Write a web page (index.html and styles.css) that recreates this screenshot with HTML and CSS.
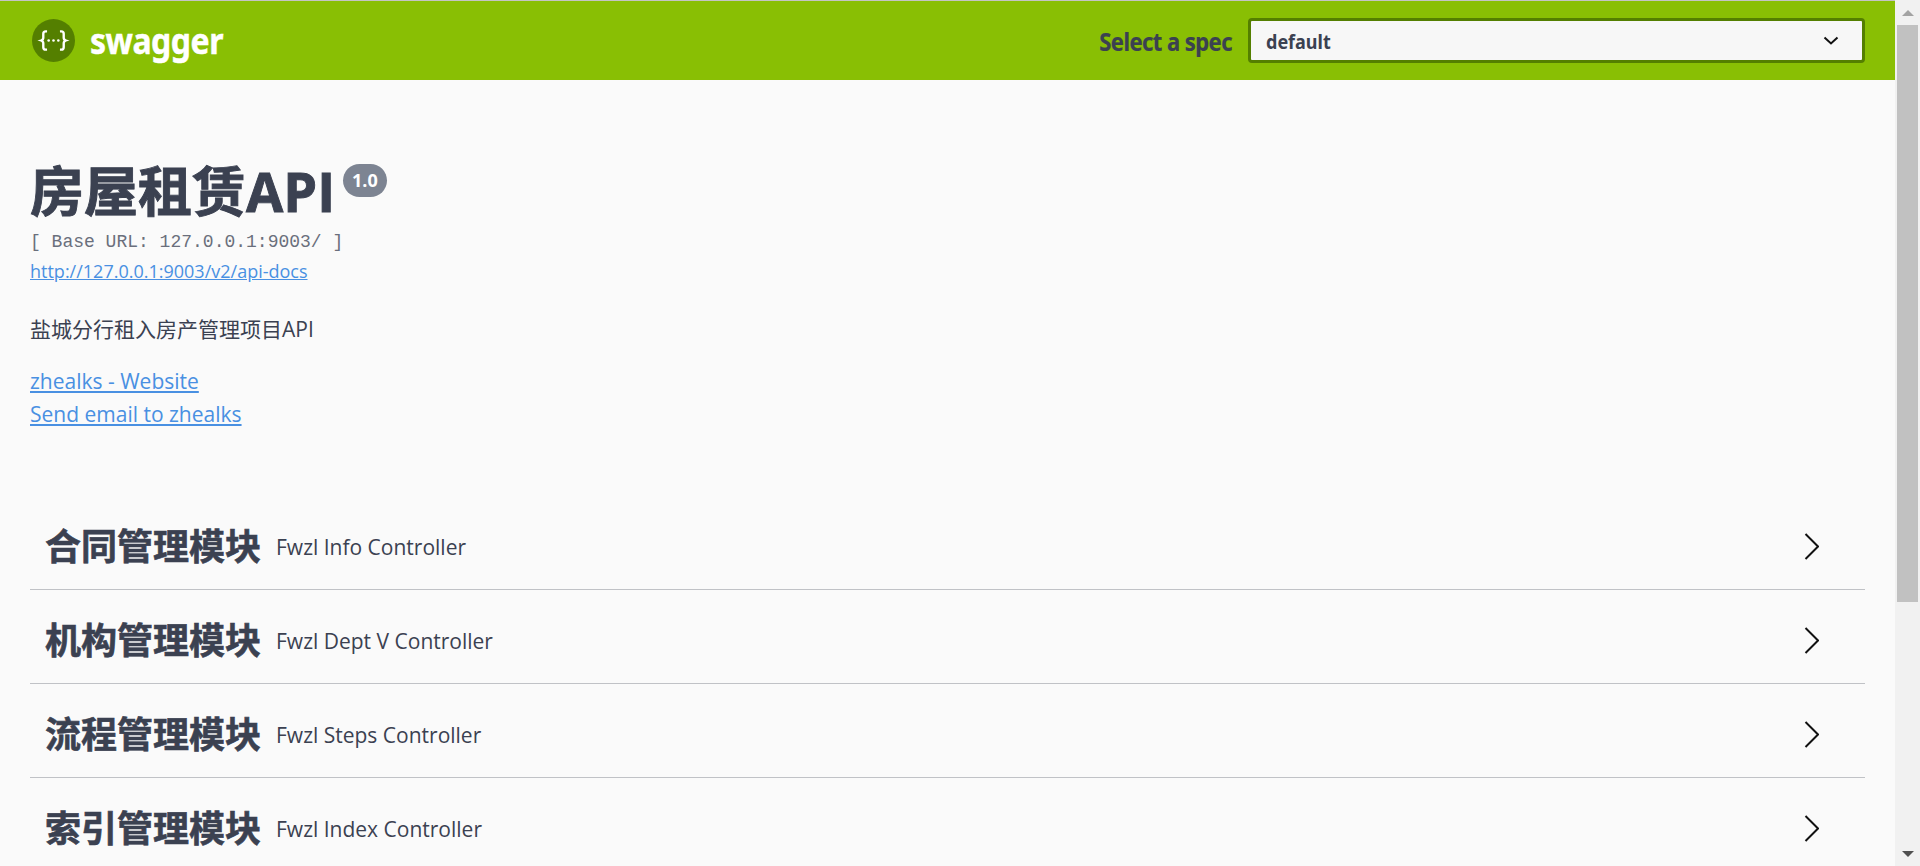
FILE: index.html
```html
<!DOCTYPE html>
<html lang="zh-CN">
<head>
<meta charset="utf-8">
<title>Swagger UI</title>
<link rel="stylesheet" href="styles.css">
</head>
<body>
<div class="app">
  <main class="page">
    <header class="topbar">
      <a class="brand">
        <svg class="brand-icon" viewBox="0 0 40 40" width="43" height="43" aria-hidden="true">
          <circle cx="20" cy="20" r="20" fill="#547f00"/>
          <path d="M14 11.5h-1.2c-1.6 0-2.3.9-2.3 2.3v3.6c0 1.4-.8 2.2-2 2.6 1.2.4 2 1.200 2 2.600v3.600c0 1.400.7 2.300 2.300 2.300H14M26 11.500h1.200c1.600 0 2.300.9 2.300 2.300v3.600c0 1.400.8 2.200 2 2.600-1.200.4-2 1.200-2 2.600v3.600c0 1.400-.7 2.300-2.300 2.300H26" fill="none" stroke="#fff" stroke-width="2.200"/>
          <circle cx="15.500" cy="20" r="1.200" fill="#fff"/><circle cx="20" cy="20" r="1.200" fill="#fff"/><circle cx="24.500" cy="20" r="1.200" fill="#fff"/>
        </svg>
        <span class="brand-name">swagger</span>
      </a>
      <label class="spec">
        <span class="spec-label">Select a spec</span>
        <span class="spec-select">
          <span class="spec-value">default</span>
          <svg viewBox="0 0 16 9" width="16" height="9" aria-hidden="true"><path d="M1.500 1.500 8 7.500l6.500-6" fill="none" stroke="#111" stroke-width="2"/></svg>
        </span>
      </label>
    </header>
    <section class="info">
      <h2 class="title"><span>房屋租赁API</span><span class="version">1.0</span></h2>
      <pre class="base-url">[ Base URL: 127.0.0.1:9003/ ]</pre>
      <a class="docs-link">http://127.0.0.1:9003/v2/api-docs</a>
      <p class="desc">盐城分行租入房产管理项目API</p>
      <a class="contact">zhealks - Website</a>
      <a class="contact">Send email to zhealks</a>
    </section>
    <section class="tags">
      <div class="tag"><h4 class="tag-name">合同管理模块</h4><small class="tag-desc">Fwzl Info Controller</small><svg class="arrow" viewBox="0 0 15 27" width="15" height="27" aria-hidden="true"><path d="M1.500 1 14 13.500 1.500 26" fill="none" stroke="#111" stroke-width="2"/></svg></div>
      <div class="tag"><h4 class="tag-name">机构管理模块</h4><small class="tag-desc">Fwzl Dept V Controller</small><svg class="arrow" viewBox="0 0 15 27" width="15" height="27" aria-hidden="true"><path d="M1.500 1 14 13.500 1.500 26" fill="none" stroke="#111" stroke-width="2"/></svg></div>
      <div class="tag"><h4 class="tag-name">流程管理模块</h4><small class="tag-desc">Fwzl Steps Controller</small><svg class="arrow" viewBox="0 0 15 27" width="15" height="27" aria-hidden="true"><path d="M1.500 1 14 13.500 1.500 26" fill="none" stroke="#111" stroke-width="2"/></svg></div>
      <div class="tag"><h4 class="tag-name">索引管理模块</h4><small class="tag-desc">Fwzl Index Controller</small><svg class="arrow" viewBox="0 0 15 27" width="15" height="27" aria-hidden="true"><path d="M1.500 1 14 13.500 1.500 26" fill="none" stroke="#111" stroke-width="2"/></svg></div>
    </section>
  </main>
  <aside class="scrollbar" aria-hidden="true">
    <span class="sb-btn"><i class="tri-up"></i></span>
    <span class="sb-thumb"></span>
    <span class="sb-space"></span>
    <span class="sb-btn"><i class="tri-down"></i></span>
  </aside>
</div>
</body>
</html>
```
FILE: styles.css
```css
* { box-sizing: border-box; }
html, body { margin: 0; height: 100%; overflow: hidden; background: #fafafa; }
body { font-family: "Open Sans", "Noto Sans CJK SC", sans-serif; color: #3b4151; }
.app { display: flex; height: 866px; }
.page { flex: 1; min-width: 0; overflow: hidden; }

.topbar { height: 80px; display: flex; align-items: center; justify-content: space-between; padding: 0 30px 0 32px; background: #89bf04; border-top: 1px solid #c4c4c4; }
.brand { display: flex; align-items: center; gap: 15px; }
.brand-icon { display: block; }
.brand-name { display: inline-block; font: 700 32px/1 "Noto Sans", sans-serif; letter-spacing: -.5px; color: #fff; -webkit-text-stroke: .4px #fff; transform: scaleY(1.12); }
.spec { display: flex; align-items: center; gap: 16px; }
.spec-label { display: inline-block; font: 700 22px/1 "Noto Sans", sans-serif; letter-spacing: -.55px; color: #3b4151; -webkit-text-stroke: .2px #3b4151; transform: scaleY(1.12); }
.spec-select { width: 617px; height: 45px; display: flex; align-items: center; justify-content: space-between; padding: 0 23px 0 15px; background: #f7f7f7; border: 3px solid #547f00; border-radius: 4px; }
.spec-value { display: inline-block; font: 700 18px/1 "Noto Sans", sans-serif; color: #3b4151; transform: scaleY(1.1); }
.spec-select svg { display: block; }

.info { padding: 0 30px; margin-top: 81px; }
.title { margin: 0; font-size: 54px; line-height: 60px; font-weight: 700; color: #3b4151; display: flex; align-items: flex-start; gap: 8px; -webkit-text-stroke: .9px #3b4151; }
.version { margin-top: 3px; height: 33px; padding: 0 9px; border-radius: 57px; background: #7d8492; color: #fff; font-size: 18px; line-height: 33px; font-weight: 700; -webkit-text-stroke: 0; }
.base-url { margin: 11px 0 0; font: 400 18px/20px "Liberation Mono", monospace; color: #6a6f7c; }
.docs-link { display: block; margin-top: 8px; font-size: 18px; line-height: 22px; color: #4990e2; text-decoration: underline; }
.desc { margin: 34px 0 0; font-size: 21px; line-height: 27px; }
.contact { display: block; font-size: 21px; line-height: 33px; color: #4990e2; text-decoration: underline; }
.desc + .contact { margin-top: 22px; }

.tags { padding: 0 30px; margin-top: 65px; }
.tag { display: flex; align-items: center; height: 94px; padding: 8px 46px 0 15px; border-bottom: 1px solid rgba(59,65,81,.3); }
.tag-name { margin: 0; font-size: 36px; line-height: 1; font-weight: 700; color: #3b4151; -webkit-text-stroke: .6px #3b4151; }
.tag-desc { margin-left: 15px; flex: 1; font-size: 21px; color: #3b4151; }
.arrow { display: block; flex: none; }

.scrollbar { width: 25px; height: 866px; flex: none; display: flex; flex-direction: column; align-items: center; background: #f1f1f1; }
.sb-btn { flex: none; width: 100%; height: 25px; display: flex; align-items: center; justify-content: center; }
.sb-thumb { flex: none; width: 21px; height: 577px; background: #c1c1c1; }
.sb-space { flex: 1; }
.tri-up, .tri-down { display: block; width: 0; height: 0; border-left: 6px solid transparent; border-right: 6px solid transparent; }
.tri-up { border-bottom: 6px solid #a3a3a3; }
.tri-down { border-top: 6px solid #505050; }
```
